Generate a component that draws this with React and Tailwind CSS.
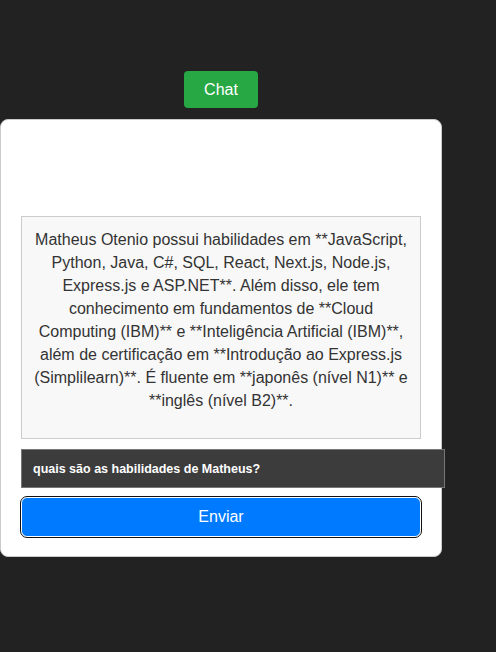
import React, { useState } from "react";

const answer =
  "Matheus Otenio possui habilidades em **JavaScript, Python, Java, C#, SQL, React, Next.js, Node.js, Express.js e ASP.NET**. Além disso, ele tem conhecimento em fundamentos de **Cloud Computing (IBM)** e **Inteligência Artificial (IBM)**, além de certificação em **Introdução ao Express.js (Simplilearn)**. É fluente em **japonês (nível N1)** e **inglês (nível B2)**.";

const App = () => {
  const [question, setQuestion] = useState("quais são as habilidades de Matheus?");

  return (
    <div
      className="min-h-[652px] bg-[#222222] pt-[71px]"
      style={{ fontFamily: '"Liberation Sans", Arial, sans-serif' }}
    >
      <div className="flex w-[442px] flex-col items-center">
        {/* Toggle */}
        <button className="h-[37px] w-[74px] rounded-[4px] bg-[#28a745] text-[16px] text-white">
          Chat
        </button>

        {/* Chat card */}
        <div className="mt-[11px] w-[442px] rounded-[8px] border border-[#cccccc] bg-white px-5 pb-[19px] pt-[96px]">
          <div className="border border-[#cccccc] bg-[#f8f8f8] px-[10px] pb-[26px] pt-[11px] text-center text-[16px] leading-[23px] text-[#333333]">
            {answer}
          </div>

          <input
            value={question}
            onChange={(e) => setQuestion(e.target.value)}
            className="mt-[10px] block h-[39px] w-[424px] border border-[#777777] bg-[#3c3c3c] px-[11px] text-[12.5px] font-bold text-white outline-none"
          />

          <button className="mt-[9px] block h-[40px] w-[400px] rounded-[6px] border border-white bg-[#007bff] text-[16px] text-white outline outline-1 outline-[#101010]">
            Enviar
          </button>
        </div>
      </div>
    </div>
  );
};

export default App;
